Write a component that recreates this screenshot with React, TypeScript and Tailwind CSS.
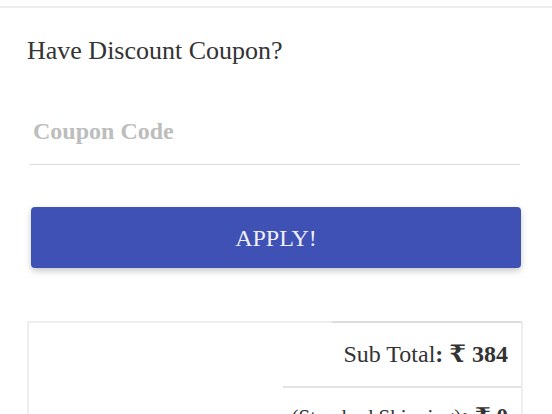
import React from "react";

export default function App() {
  const serif = { fontFamily: '"Liberation Serif", "DejaVu Serif", serif' };
  return (
    <div className="w-[552px] h-[414px] overflow-hidden bg-white text-[#333333]" style={serif}>
      <div className="mt-[6px] h-[2px] bg-[#ededed]" />
      <div className="px-[27px]">
        <h2 className="mt-[28px] text-[26px] leading-[30px] font-normal">Have Discount Coupon?</h2>

        <div className="mt-[51px] ml-[3px] w-[490px] pb-[19px] border-b border-[#dddddd]">
          <input
            type="text"
            placeholder="Coupon Code"
            className="block w-full h-[28px] pl-[3px] text-[24px] leading-[28px] font-bold outline-none bg-transparent placeholder:text-[#bdbdbd] placeholder:font-bold"
            style={serif}
          />
        </div>

        <button
          className="mt-[42px] ml-[4px] flex h-[61px] w-[490px] items-center justify-center rounded-[4px] bg-[#3f51b5] text-[24px] text-[#eef0fa] shadow-[0_3px_6px_rgba(0,0,0,0.22)]"
          style={serif}
        >
          APPLY!
        </button>

        <div className="mt-[53px] w-[496px] h-[120px] border-2 border-b-0 border-[#eeeeee]">
          <div className="flex justify-end">
            <div className="-mt-[2px] h-[65px] w-[189px] border-t-2 border-[#dddddd] pt-[18px] pr-[13px] text-right text-[24px] leading-[26px] whitespace-nowrap">
              Sub Total<span className="font-bold">: ₹ 384</span>
            </div>
          </div>
          <div className="flex justify-end">
            <div className="h-[65px] w-[238px] border-t-2 border-[#e3e3e3] pt-[16px] pr-[13px] text-right text-[21px] leading-[26px] whitespace-nowrap">
              (Standard Shipping)<span className="font-bold text-[23px]">: ₹ 0</span>
            </div>
          </div>
        </div>
      </div>
    </div>
  );
}
